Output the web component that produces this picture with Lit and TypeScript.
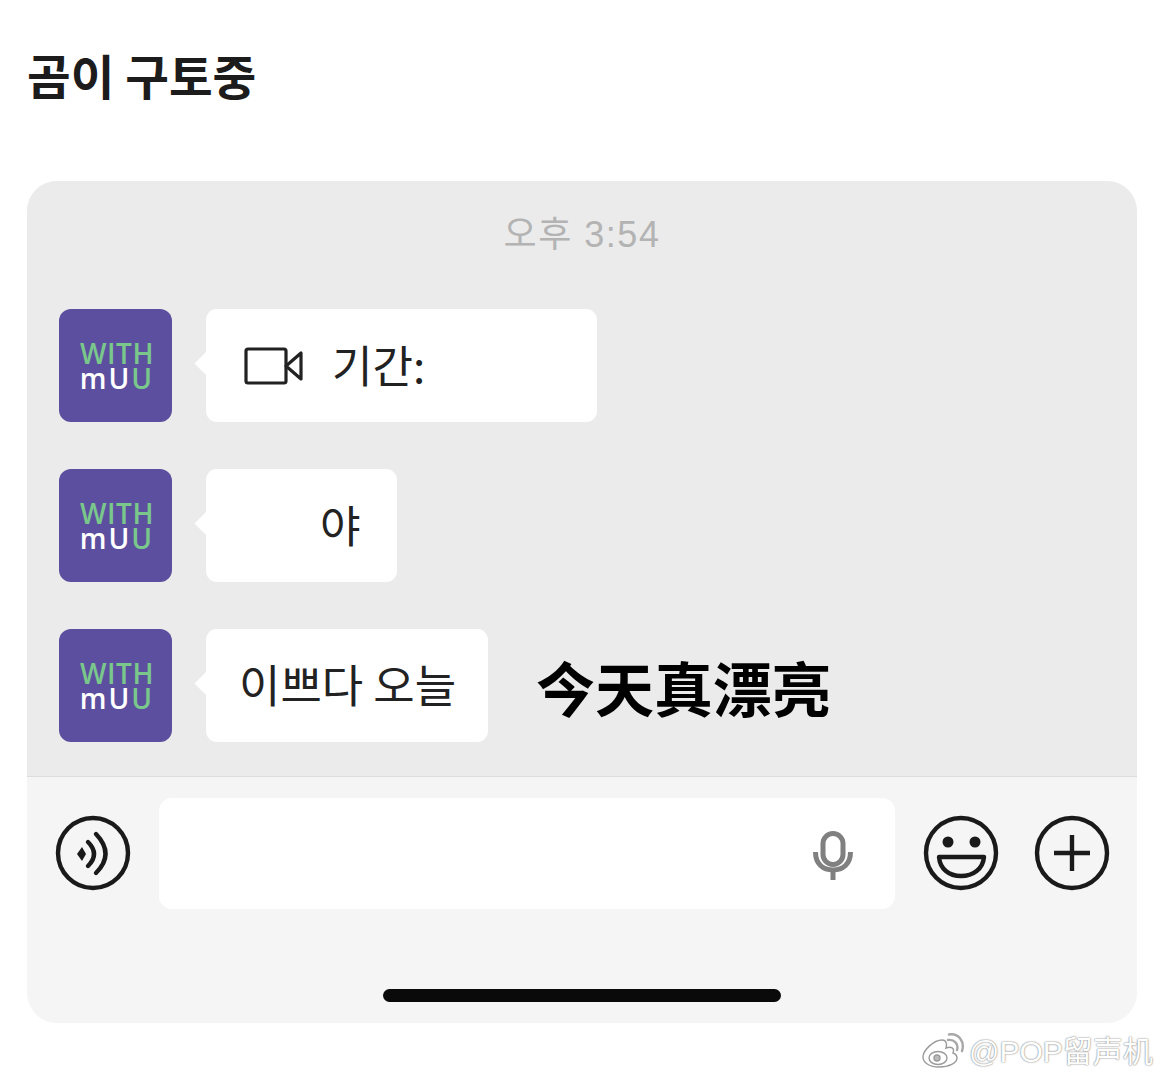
import { LitElement, html, css } from "lit";
import { customElement } from "lit/decorators.js";

@customElement("app-root")
export class AppRoot extends LitElement {
  static styles = css`
    :host { display: block; width: 1163px; height: 1080px; background: #fff; position: relative; overflow: hidden; font-family: "Noto Sans CJK KR", "Noto Sans", sans-serif; color: #222; }
    .title { margin: 0; padding: 40px 0 0 27px; height: 181px; box-sizing: border-box; font-size: 47.5px; line-height: 70px; font-weight: 700; color: #1c1c1c; }
    .card { margin-left: 27px; width: 1110px; height: 842px; border-radius: 30px; overflow: hidden; background: #f5f5f5; display: flex; flex-direction: column; }
    .chat { height: 595px; background: #ebebeb; border-bottom: 1px solid #dcdcdc; display: flex; flex-direction: column; padding-left: 32px; }
    .time { height: 128px; padding-right: 32px; box-sizing: border-box; padding-top: 26px; text-align: center; font-size: 36px; line-height: 56px; letter-spacing: 1.5px; color: #b3b3b3; font-family: "Liberation Sans", "Noto Sans CJK KR", sans-serif; }
    .rows { display: flex; flex-direction: column; gap: 47px; }
    .row { display: flex; align-items: center; height: 113px; }
    .avatar { width: 113px; height: 113px; padding-left: 3px; box-sizing: border-box; border-radius: 12px; background: #5d4f9f; display: flex; flex-direction: column; align-items: center; justify-content: center; font-family: "Open Sans", sans-serif; font-size: 28px; line-height: 25px; font-weight: 600; flex: none; }
    .with { color: #7ac78c; letter-spacing: 0.5px; }
    .muu { color: #fff; letter-spacing: 2px; }
    .muu b { color: #7ac78c; font-weight: 600; }
    .bubble { position: relative; margin-left: 34px; height: 113px; border-radius: 11px; background: #fff; display: flex; align-items: center; box-sizing: border-box; font-size: 44px; color: #222; flex: none; }
    .bubble::before { content: ""; position: absolute; left: -8px; top: 46px; width: 17px; height: 17px; background: #fff; transform: rotate(45deg); }
    .b1 { width: 391px; padding-left: 38px; gap: 28px; }
    .b2 { width: 191px; padding-left: 114px; }
    .b3 { width: 282px; padding-left: 33px; font-size: 45px; }
    .label { position: relative; top: -2px; line-height: 60px; }
    .caption { margin-left: 48px; font-family: "Noto Sans CJK SC", sans-serif; font-weight: 700; font-size: 59px; line-height: 80px; color: #000; position: relative; top: 1px; }
    .bar { flex: 1; display: flex; flex-direction: column; }
    .inputrow { display: flex; align-items: flex-start; height: 212px; padding-top: 21px; box-sizing: border-box; }
    .ic { flex: none; display: block; margin-top: 17px; }
    .speaker { margin-left: 28px; }
    .input { margin-left: 28px; width: 736px; height: 111px; background: #fff; border-radius: 13px; display: flex; align-items: center; justify-content: flex-end; padding-right: 42px; box-sizing: border-box; flex: none; }
    .mic { margin-top: 4px; }
    .smile { margin-left: 28px; }
    .plus { margin-left: 35px; }
    .home { align-self: flex-start; margin-left: 356px; width: 398px; height: 13px; border-radius: 7px; background: #0a0a0a; }
    .mark { position: absolute; left: 921px; top: 1030px; display: flex; align-items: center; gap: 4px; color: #fff; font-family: "Liberation Sans", "Noto Sans CJK SC", sans-serif; font-size: 30px; line-height: 44px; text-shadow: 0 0 2px #8a8a8a, 0 0 1px #8a8a8a; }
    .mark svg { flex: none; }
  `;

  private logo() {
    return html`<div class="avatar"><span class="with">WITH</span><span class="muu">mU<b>U</b></span></div>`;
  }

  render() {
    return html`
      <h1 class="title">곰이 구토중</h1>
      <section class="card">
        <div class="chat">
          <div class="time">오후 3:54</div>
          <div class="rows">
            <div class="row">${this.logo()}
              <div class="bubble b1">
                <svg width="60" height="38" viewBox="0 0 60 38" fill="none" stroke="#222" stroke-width="3.2" stroke-linejoin="round">
                  <rect x="2" y="2" width="40" height="34" rx="2"/>
                  <path d="M42 19 L57 6 V32 Z"/>
                </svg>
                <span class="label">기간:</span>
              </div>
            </div>
            <div class="row">${this.logo()}
              <div class="bubble b2"><span class="label">야</span></div>
            </div>
            <div class="row">${this.logo()}
              <div class="bubble b3"><span class="label">이쁘다 오늘</span></div>
              <div class="caption">今天真漂亮</div>
            </div>
          </div>
        </div>
        <div class="bar">
          <div class="inputrow">
            <svg class="ic speaker" width="76" height="76" viewBox="0 0 76 76" fill="none" stroke="#1a1a1a" stroke-width="4.4">
              <circle cx="38" cy="38" r="35"/>
              <path d="M22 39 L27 32 L31 39 L27 46 Z" fill="#1a1a1a" stroke="none"/>
              <path d="M33 27 Q45 39 33 51" stroke-linecap="round"/>
              <path d="M41 19 Q60 39 41 58" stroke-linecap="round"/>
            </svg>
            <div class="input">
              <svg class="mic" width="40" height="50" viewBox="0 0 40 50" fill="none" stroke="#808080" stroke-width="5">
                <rect x="10" y="2.5" width="20" height="31" rx="10"/>
                <path d="M2.5 21 C2.5 33 10 39 20 39 C30 39 37.5 33 37.5 21"/>
                <path d="M20 39 V49"/>
              </svg>
            </div>
            <svg class="ic smile" width="76" height="76" viewBox="0 0 76 76" fill="none" stroke="#1a1a1a" stroke-width="4.4">
              <circle cx="38" cy="38" r="35"/>
              <circle cx="25" cy="27" r="5.5" fill="#1a1a1a" stroke="none"/>
              <circle cx="52" cy="27" r="5.5" fill="#1a1a1a" stroke="none"/>
              <path d="M16 42 H61 C60 54 50 61 38 61 C26 61 17 54 16 42 Z" stroke-linejoin="round"/>
            </svg>
            <svg class="ic plus" width="76" height="76" viewBox="0 0 76 76" fill="none" stroke="#1a1a1a" stroke-width="4.4">
              <circle cx="38" cy="38" r="35"/>
              <path d="M38 20 V56 M20 38 H56"/>
            </svg>
          </div>
          <div class="home"></div>
        </div>
      </section>
      <div class="mark">
        <svg width="44" height="38" viewBox="0 0 44 38" fill="#fff" stroke="#9a9a9a" stroke-width="1.4">
          <path d="M18 34 C9 34 2 30 2 24 C2 17 13 7 21 7 C26 7 26 12 25 15 C30 13 34 15 32 20 C35 21 36 23 36 25 C36 30 28 34 18 34 Z"/>
          <ellipse cx="17" cy="25" rx="9" ry="6.5" fill="#fff"/>
          <circle cx="16" cy="25" r="3" fill="#bbb"/>
          <path d="M27 7 C33 6 38 11 36 17 M28 1.5 C38 0 44 9 41 18" fill="none" stroke="#a8a8a8" stroke-width="2.4" stroke-linecap="round"/>
        </svg>
        <span>@POP留声机</span>
      </div>
    `;
  }
}
